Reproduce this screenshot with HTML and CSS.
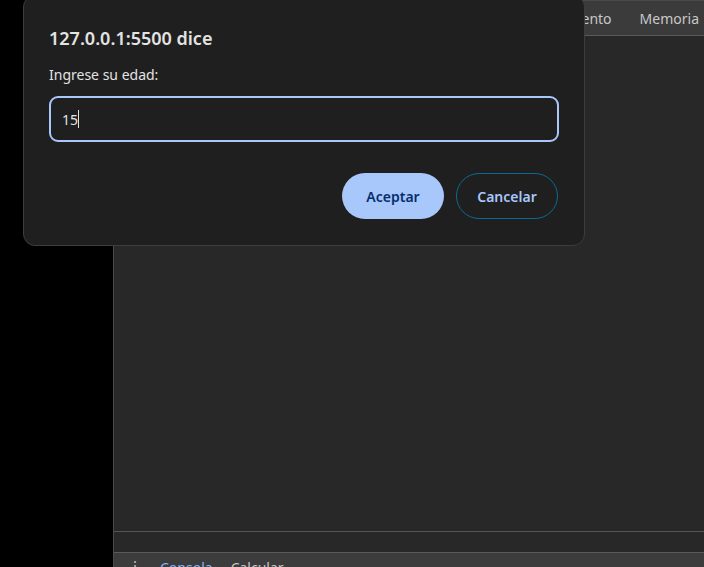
FILE: index.html
```html
<!DOCTYPE html>
<html lang="es">
<head>
<meta charset="utf-8">
<title>Prompt</title>
<link rel="stylesheet" href="styles.css">
</head>
<body>
<div class="screen">
  <div class="left-black"></div>
  <div class="devtools">
    <div class="toolbar">
      <span class="tab">Rendimiento</span>
      <span class="tab">Memoria</span>
    </div>
    <div class="main"></div>
    <div class="strip"></div>
    <div class="drawer">
      <span class="kebab">⋮</span>
      <span class="dtab active">Consola</span>
      <span class="dtab">Calcular</span>
    </div>
  </div>
</div>

<div class="dialog">
  <div class="title">127.0.0.1:5500 dice</div>
  <div class="label">Ingrese su edad:</div>
  <div class="input"><span class="value">15</span><span class="caret"></span></div>
  <div class="buttons">
    <button class="btn primary">Aceptar</button>
    <button class="btn secondary">Cancelar</button>
  </div>
</div>
</body>
</html>
```

FILE: styles.css
```css
html, body {
  margin: 0;
  padding: 0;
  width: 704px;
  height: 567px;
  overflow: hidden;
  background: #000;
  font-family: "Noto Sans", "Open Sans", sans-serif;
}

.screen {
  display: flex;
  height: 567px;
}

.left-black {
  width: 113px;
  background: #000;
}

.devtools {
  flex: 1;
  display: flex;
  flex-direction: column;
  background: #282828;
  border-left: 1px solid #4a4a4a;
}

.toolbar {
  height: 34px;
  background: #3b3b3b;
  border-top: 1px solid #4a4a4a;
  border-bottom: 1px solid #5a5a5a;
  display: flex;
  align-items: center;
  justify-content: flex-end;
  gap: 28px;
  padding-right: 5px;
  font-size: 14px;
  color: #c8c8c8;
}

.main {
  flex: 1;
}

.strip {
  height: 20px;
  border-top: 1px solid #555;
  border-bottom: 1px solid #5a5a5a;
  background: #282828;
}

.drawer {
  height: 14px;
  background: #3c3c3c;
  display: flex;
  align-items: flex-start;
  overflow: hidden;
  font-size: 14px;
  color: #c8c8c8;
  line-height: 14px;
  padding-left: 14px;
  gap: 18px;
}

.kebab {
  margin-top: 6px;
  color: #bbb;
}

.dtab {
  margin-top: 8px;
}

.dtab.active {
  color: #8ab4f8;
}

.dialog {
  position: absolute;
  left: 23px;
  top: -5px;
  width: 562px;
  height: 251px;
  box-sizing: border-box;
  background: #1f1f1f;
  border: 1px solid #3d3d3d;
  border-radius: 12px;
  padding: 30px 25px 0 25px;
  color: #e3e3e3;
}

.title {
  font-size: 18px;
  font-weight: 600;
  line-height: 24px;
  color: #e3e3e3;
}

.label {
  margin-top: 15px;
  font-size: 14px;
  line-height: 20px;
  color: #e3e3e3;
}

.input {
  margin-top: 11px;
  height: 46px;
  box-sizing: border-box;
  border: 2px solid #a8c7fa;
  border-radius: 9px;
  display: flex;
  align-items: center;
  padding-left: 11px;
  font-size: 14px;
  color: #e3e3e3;
}

.caret {
  display: inline-block;
  width: 1px;
  height: 18px;
  background: #e3e3e3;
}

.buttons {
  margin-top: 31px;
  display: flex;
  justify-content: flex-end;
  gap: 12px;
  padding-right: 1px;
}

.btn {
  width: 102px;
  height: 46px;
  border-radius: 23px;
  font-family: inherit;
  font-size: 14px;
  font-weight: 600;
  cursor: pointer;
}

.btn.primary {
  background: #a8c7fa;
  color: #062e6f;
  border: none;
}

.btn.secondary {
  background: transparent;
  color: #a8c7fa;
  border: 1px solid #0b6a96;
}
```
